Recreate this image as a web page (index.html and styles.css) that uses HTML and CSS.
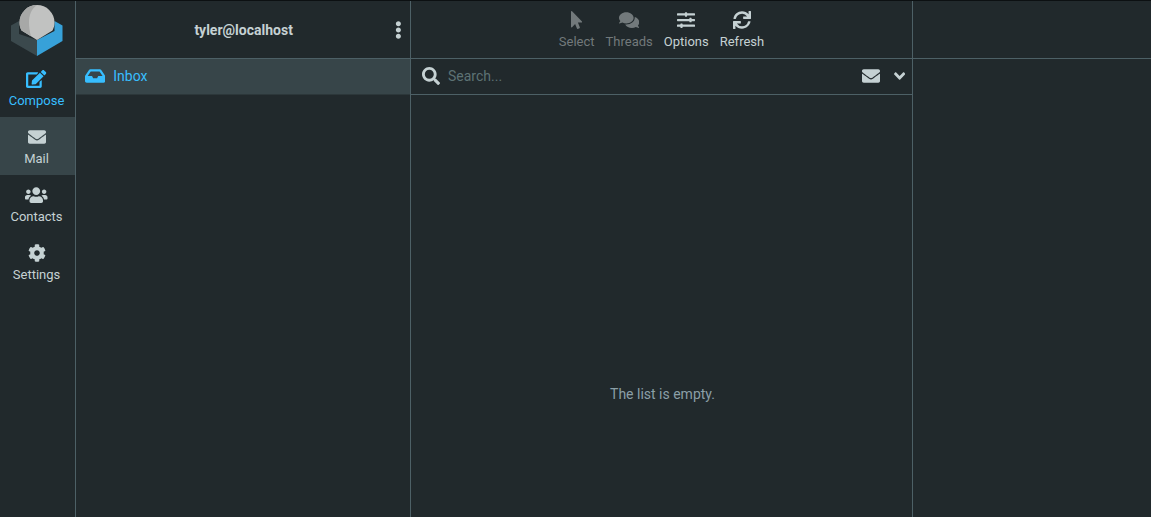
FILE: index.html
```
<!DOCTYPE html>
<html lang="en">
<head>
<meta charset="utf-8">
<title>Webmail :: Inbox</title>
<link rel="stylesheet" href="styles.css">
</head>
<body>
<div class="layout">
  <nav class="taskmenu" aria-label="Tasks">
    <a class="logo" href="#" aria-label="Home">
      <svg width="52" height="52" viewBox="0 0 52 52" aria-hidden="true">
        <path fill="#3b494d" d="M0 21.500L8 17V30L26 36V52L0 37z"/>
        <path fill="#37a1d9" d="M51.500 21.500L43.500 17V27L26 36V52L51.500 37z"/>
        <path fill="#c1c2c1" d="M26 1a17.500 17.500 0 0 1 17.500 17.500c0 3-.700 5.500-2 8L26 36l-15.500-9.500c-1.300-2.500-2-5-2-8A17.500 17.500 0 0 1 26 1z"/>
        <path fill="#a7a8a7" d="M26 1C20 5 18 12 18 18.500c0 4 .600 8.500 2 13.800l-9.500-5.800c-1.300-2.500-2-5-2-8A17.500 17.500 0 0 1 26 1z"/>
      </svg>
    </a>
    <a class="task task-compose" href="#">
      <svg class="icon" viewBox="0 0 576 512" aria-hidden="true"><path d="M402.600 83.200l90.200 90.200c3.800 3.800 3.800 10 0 13.800L274.400 405.600l-92.800 10.300c-12.400 1.400-22.900-9.100-21.500-21.500l10.300-92.800L388.800 83.200c3.800-3.800 10-3.800 13.800 0zm162-22.900l-48.800-48.800c-15.200-15.200-39.900-15.200-55.200 0l-35.400 35.400c-3.800 3.800-3.800 10 0 13.800l90.200 90.200c3.800 3.800 10 3.800 13.800 0l35.400-35.400c15.200-15.300 15.200-40 0-55.200zM384 346.200V448H64V128h229.800c3.200 0 6.200-1.300 8.500-3.500l40-40c7.600-7.600 2.200-20.500-8.500-20.500H48C21.500 64 0 85.500 0 112v352c0 26.500 21.500 48 48 48h352c26.500 0 48-21.500 48-48V306.200c0-10.700-12.900-16-20.500-8.500l-40 40c-2.200 2.300-3.500 5.300-3.500 8.500z"/></svg>
      <span>Compose</span>
    </a>
    <a class="task task-selected" href="#" aria-current="page">
      <svg class="icon" viewBox="0 0 512 512" aria-hidden="true"><path d="M502.300 190.800c3.900-3.100 9.700-.2 9.700 4.700V400c0 26.500-21.500 48-48 48H48c-26.500 0-48-21.500-48-48V195.600c0-5 5.700-7.800 9.700-4.700 22.400 17.400 52.100 39.500 154.100 113.600 21.100 15.400 56.700 47.800 92.200 47.600 35.700.3 72-32.800 92.300-47.600 102-74.100 131.600-96.300 154-113.700zM256 320c23.200.4 56.600-29.200 73.400-41.400 132.700-96.300 142.800-104.700 173.400-128.700 5.800-4.500 9.200-11.500 9.200-18.900v-19c0-26.500-21.500-48-48-48H48c-26.500 0-48 21.500-48 48v19c0 7.400 3.400 14.300 9.200 18.900 30.600 23.900 40.700 32.400 173.400 128.700 16.800 12.200 50.200 41.800 73.400 41.400z"/></svg>
      <span>Mail</span>
    </a>
    <a class="task" href="#">
      <svg class="icon" viewBox="0 0 640 512" aria-hidden="true"><path d="M96 224c35.300 0 64-28.700 64-64s-28.700-64-64-64-64 28.700-64 64 28.700 64 64 64zm448 0c35.300 0 64-28.700 64-64s-28.700-64-64-64-64 28.700-64 64 28.700 64 64 64zm32 32h-64c-17.600 0-33.500 7.100-45.100 18.600 40.300 22.100 68.900 62 75.100 109.400h66c17.700 0 32-14.300 32-32v-32c0-35.300-28.700-64-64-64zm-256 0c61.900 0 112-50.100 112-112S381.900 32 320 32 208 82.100 208 144s50.100 112 112 112zm76.800 32h-8.300c-20.800 10-43.900 16-68.500 16s-47.600-6-68.500-16h-8.300C179.600 288 128 339.600 128 403.200V432c0 26.500 21.500 48 48 48h288c26.500 0 48-21.500 48-48v-28.800c0-63.600-51.600-115.200-115.200-115.200zm-223.700-13.400C161.500 263.100 145.600 256 128 256H64c-35.300 0-64 28.700-64 64v32c0 17.700 14.300 32 32 32h65.900c6.300-47.400 34.900-87.300 75.200-109.400z"/></svg>
      <span>Contacts</span>
    </a>
    <a class="task" href="#">
      <svg class="icon" viewBox="0 0 512 512" aria-hidden="true"><path d="M487.400 315.700l-42.600-24.600c4.300-23.200 4.300-47 0-70.200l42.600-24.600c4.900-2.800 7.100-8.600 5.500-14-11.100-35.600-30-67.800-54.700-94.600-3.800-4.100-10-5.100-14.800-2.300L380.800 110c-17.900-15.400-38.500-27.300-60.800-35.100V25.800c0-5.600-3.900-10.500-9.400-11.700-36.700-8.200-74.300-7.800-109.200 0-5.500 1.200-9.400 6.100-9.400 11.700V75c-22.200 7.900-42.800 19.800-60.800 35.100L88.700 85.500c-4.900-2.800-11-1.900-14.800 2.300-24.700 26.700-43.600 58.900-54.700 94.600-1.700 5.400.6 11.200 5.500 14L67.300 221c-4.300 23.200-4.300 47 0 70.200l-42.600 24.600c-4.900 2.800-7.100 8.600-5.500 14 11.100 35.600 30 67.800 54.700 94.600 3.800 4.100 10 5.100 14.800 2.300l42.600-24.600c17.900 15.400 38.500 27.300 60.800 35.100v49.200c0 5.600 3.900 10.500 9.400 11.700 36.700 8.200 74.300 7.800 109.200 0 5.500-1.200 9.400-6.100 9.400-11.700v-49.200c22.200-7.900 42.800-19.800 60.800-35.100l42.600 24.600c4.900 2.800 11 1.900 14.800-2.300 24.700-26.700 43.600-58.900 54.700-94.600 1.500-5.500-.7-11.300-5.600-14.100zM256 336c-44.100 0-80-35.900-80-80s35.900-80 80-80 80 35.900 80 80-35.900 80-80 80z"/></svg>
      <span>Settings</span>
    </a>
  </nav>

  <aside class="folders">
    <header class="header folders-header">
      <h1 class="username">tyler@localhost</h1>
      <button class="icon-button" type="button" aria-label="Folder actions">
        <svg class="icon" viewBox="0 0 192 512" aria-hidden="true"><path d="M96 184c39.800 0 72 32.200 72 72s-32.200 72-72 72-72-32.200-72-72 32.200-72 72-72zM24 80c0 39.800 32.200 72 72 72s72-32.200 72-72S135.800 8 96 8 24 40.200 24 80zm0 352c0 39.800 32.200 72 72 72s72-32.200 72-72-32.200-72-72-72-72 32.200-72 72z"/></svg>
      </button>
    </header>
    <a class="folder" href="#">
      <svg class="icon" viewBox="0 0 576 512" aria-hidden="true"><path d="M567.938 243.908L462.250 85.374A48.003 48.003 0 0 0 422.311 64H153.689a48 48 0 0 0-39.938 21.374L8.062 243.908A47.994 47.994 0 0 0 0 270.533V400c0 26.510 21.490 48 48 48h480c26.510 0 48-21.490 48-48V270.533a47.994 47.994 0 0 0-8.062-26.625zM162.252 128h251.497l85.333 128H376l-32 64H232l-32-64H76.918l85.334-128z"/></svg>
      <span>Inbox</span>
    </a>
  </aside>

  <main class="messages">
    <header class="header toolbar">
      <button class="tool" type="button" disabled>
        <svg class="icon" viewBox="0 0 320 512" aria-hidden="true"><path d="M302.189 329.126H196.105l55.831 135.993c3.889 9.428-.555 19.999-9.444 23.999l-49.165 21.427c-9.165 4-19.443-.571-23.332-9.714l-53.053-129.136-86.664 89.138C18.729 472.710 0 463.554 0 447.977V18.299C0 1.899 19.921-6.096 30.277 5.443l284.412 292.542c11.472 11.179 3.007 31.141-12.500 31.141z"/></svg>
        <span>Select</span>
      </button>
      <button class="tool" type="button" disabled>
        <svg class="icon" viewBox="0 0 576 512" aria-hidden="true"><path d="M416 192c0-88.400-93.100-160-208-160S0 103.600 0 192c0 34.300 14.100 65.900 38 92-13.400 30.200-35.500 54.200-35.800 54.500-2.200 2.300-2.800 5.700-1.500 8.700S4.800 352 8 352c36.600 0 66.900-12.300 88.700-25 32.200 15.700 70.300 25 111.300 25 114.900 0 208-71.600 208-160zm122 220c23.900-26 38-57.700 38-92 0-66.900-53.500-124.200-129.300-148.100.9 6.600 1.300 13.300 1.300 20.100 0 105.900-107.700 192-240 192-10.800 0-21.300-.8-31.700-1.900C207.800 439.600 281.800 480 368 480c41 0 79.100-9.200 111.300-25 21.800 12.700 52.100 25 88.700 25 3.200 0 6.100-1.900 7.300-4.800 1.300-2.900.7-6.300-1.500-8.700-.3-.3-22.400-24.200-35.800-54.500z"/></svg>
        <span>Threads</span>
      </button>
      <button class="tool" type="button">
        <svg class="icon" viewBox="0 0 512 512" aria-hidden="true"><path d="M496 384H160v-16c0-8.800-7.200-16-16-16h-32c-8.800 0-16 7.200-16 16v16H16c-8.800 0-16 7.200-16 16v32c0 8.800 7.200 16 16 16h80v16c0 8.800 7.200 16 16 16h32c8.800 0 16-7.200 16-16v-16h336c8.800 0 16-7.200 16-16v-32c0-8.800-7.200-16-16-16zm0-160h-80v-16c0-8.800-7.200-16-16-16h-32c-8.800 0-16 7.200-16 16v16H16c-8.800 0-16 7.200-16 16v32c0 8.800 7.200 16 16 16h336v16c0 8.800 7.200 16 16 16h32c8.800 0 16-7.200 16-16v-16h80c8.800 0 16-7.200 16-16v-32c0-8.800-7.200-16-16-16zm0-160H288V48c0-8.800-7.200-16-16-16h-32c-8.800 0-16 7.200-16 16v16H16C7.200 64 0 71.200 0 80v32c0 8.800 7.200 16 16 16h208v16c0 8.800 7.200 16 16 16h32c8.800 0 16-7.200 16-16v-16h208c8.800 0 16-7.200 16-16V80c0-8.800-7.200-16-16-16z"/></svg>
        <span>Options</span>
      </button>
      <button class="tool" type="button">
        <svg class="icon" viewBox="0 0 512 512" aria-hidden="true"><path d="M440.650 12.570l4 82.770A247.160 247.160 0 0 0 255.830 8C134.730 8 33.910 94.920 12.290 209.820A12 12 0 0 0 24.090 224h49.050a12 12 0 0 0 11.670-9.260 175.910 175.910 0 0 1 317-56.940l-101.460-4.860a12 12 0 0 0-12.570 12v47.410a12 12 0 0 0 12 12H500a12 12 0 0 0 12-12V12a12 12 0 0 0-12-12h-47.370a12 12 0 0 0-11.980 12.570zM255.830 432a175.610 175.610 0 0 1-146-77.800l101.800 4.870a12 12 0 0 0 12.570-12v-47.400a12 12 0 0 0-12-12H12a12 12 0 0 0-12 12V500a12 12 0 0 0 12 12h47.350a12 12 0 0 0 12-12.600l-4.150-82.570A247.170 247.170 0 0 0 255.830 504c121.110 0 221.930-86.920 243.550-201.820a12 12 0 0 0-11.800-14.180h-49.050a12 12 0 0 0-11.670 9.260A175.860 175.860 0 0 1 255.830 432z"/></svg>
        <span>Refresh</span>
      </button>
    </header>
    <form class="searchbar" role="search">
      <label class="search-label" for="search" aria-label="Search messages">
        <svg class="icon" viewBox="0 0 512 512" aria-hidden="true"><path d="M505 442.700L405.300 343c-4.500-4.500-10.600-7-17-7H372c27.600-35.300 44-79.700 44-128C416 93.100 322.900 0 208 0S0 93.100 0 208s93.100 208 208 208c48.300 0 92.700-16.400 128-44v16.300c0 6.400 2.500 12.500 7 17l99.700 99.700c9.400 9.400 24.600 9.400 33.900 0l28.300-28.300c9.400-9.400 9.400-24.600.1-34zM208 336c-70.700 0-128-57.200-128-128 0-70.700 57.200-128 128-128 70.700 0 128 57.200 128 128 0 70.700-57.200 128-128 128z"/></svg>
      </label>
      <input class="search-input" id="search" type="text" placeholder="Search...">
      <button class="icon-button" type="button" aria-label="Unread messages">
        <svg class="icon" viewBox="0 0 512 512" aria-hidden="true"><path d="M502.300 190.800c3.900-3.100 9.700-.2 9.700 4.700V400c0 26.500-21.500 48-48 48H48c-26.500 0-48-21.500-48-48V195.600c0-5 5.700-7.800 9.700-4.700 22.400 17.400 52.100 39.500 154.100 113.600 21.100 15.400 56.700 47.800 92.200 47.600 35.700.3 72-32.800 92.300-47.600 102-74.100 131.600-96.300 154-113.700zM256 320c23.200.4 56.600-29.200 73.400-41.400 132.700-96.300 142.800-104.700 173.400-128.700 5.800-4.500 9.200-11.500 9.200-18.900v-19c0-26.500-21.500-48-48-48H48c-26.500 0-48 21.500-48 48v19c0 7.400 3.400 14.300 9.200 18.900 30.600 23.900 40.700 32.400 173.400 128.700 16.800 12.200 50.200 41.800 73.400 41.400z"/></svg>
      </button>
      <button class="icon-button" type="button" aria-label="Search options">
        <svg class="icon" viewBox="0 0 320 512" aria-hidden="true"><path d="M143 352.300L7 216.300c-9.400-9.400-9.400-24.600 0-33.900l22.600-22.600c9.400-9.400 24.600-9.400 33.900 0l96.400 96.400 96.400-96.400c9.400-9.400 24.600-9.400 33.900 0l22.600 22.600c9.400 9.400 9.400 24.600 0 33.900l-136 136c-9.200 9.400-24.400 9.400-33.800 0z"/></svg>
      </button>
    </form>
    <p class="empty">The list is empty.</p>
  </main>

  <section class="preview" aria-label="Message preview">
    <header class="header"></header>
  </section>
</div>
</body>
</html>
```
FILE: styles.css
```
:root {
  --bg: #21292c;
  --selected: #374549;
  --border: #4d6066;
  --text: #c5d1d3;
  --accent: #37beff;
}

* {
  box-sizing: border-box;
}

body {
  margin: 0;
  background: var(--bg);
  color: var(--text);
  font: 14px/20px Roboto, "Liberation Sans", sans-serif;
}

a {
  color: inherit;
  text-decoration: none;
}

button {
  padding: 0;
  border: 0;
  background: none;
  color: inherit;
  font: inherit;
}

.icon {
  display: block;
  height: 18px;
  fill: currentColor;
}

.layout {
  display: grid;
  grid-template-columns: 76px 335fr 502fr 238fr;
  min-height: 100vh;
  border-top: 1px solid #0c1012;
}

.taskmenu,
.folders,
.messages {
  border-right: 1px solid var(--border);
}

.logo {
  display: flex;
  justify-content: center;
  height: 58px;
  padding: 3px 2px 0 0;
}

.task,
.tool {
  display: flex;
  flex-direction: column;
  align-items: center;
  gap: 4px;
  font-size: 13px;
  line-height: 18px;
}

.task {
  height: 58px;
  padding: 11px 2px 0 0;
}

.task-compose {
  color: var(--accent);
}

.task-selected {
  background: var(--selected);
}

.header {
  display: flex;
  align-items: center;
  height: 58px;
  border-bottom: 1px solid var(--border);
}

.folders-header {
  padding: 0 8px 0 16px;
}

.username {
  flex: 1;
  margin: 0;
  font-size: 14px;
  font-weight: 700;
  text-align: center;
}

.folder {
  display: flex;
  align-items: center;
  gap: 8px;
  height: 36px;
  padding: 0 9px 1px;
  border-bottom: 1px solid #2c373a;
  background: var(--selected);
  color: var(--accent);
}

.messages,
.folders {
  display: flex;
  flex-direction: column;
}

.toolbar {
  justify-content: center;
  gap: 11px;
  padding-top: 3px;
}

.tool:disabled {
  color: #72797b;
}

.searchbar {
  display: flex;
  align-items: center;
  gap: 8px;
  height: 36px;
  padding: 0 4px 1px 11px;
  border-bottom: 1px solid var(--border);
}

.search-input {
  flex: 1;
  min-width: 0;
  padding: 0;
  border: 0;
  outline: 0;
  background: none;
  color: var(--text);
  font: inherit;
}

.search-input::placeholder {
  color: #5d7274;
  opacity: 1;
}

.searchbar .icon-button {
  padding: 0 3px;
}

.empty {
  flex: 1;
  display: flex;
  align-items: center;
  justify-content: center;
  margin: 0;
  padding: 176px 0 0 2px;
  color: #8b9fa7;
}
```
